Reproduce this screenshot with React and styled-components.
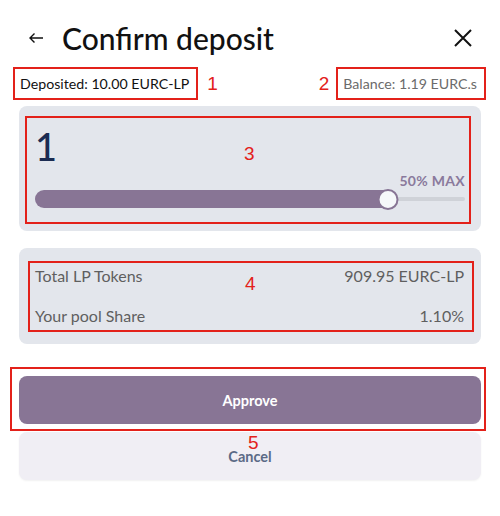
import styled, { createGlobalStyle } from "styled-components"

const GlobalStyle = createGlobalStyle`
  body {
    margin: 0;
    background: #fff;
    font-family: "Lato", "Noto Sans", sans-serif;
  }
`

const Page = styled.div`
  width: 500px;
  height: 516px;
  box-sizing: border-box;
  padding-top: 20px;
`

const Header = styled.div`
  display: flex;
  align-items: center;
  height: 36px;
  padding: 0 28px 0 29px;
  .title {
    margin: 0 0 0 18px;
    font-size: 30px;
    font-weight: 500;
    color: #111;
    flex: 1;
    line-height: 36px;
  }
`

const InfoRow = styled.div`
  display: flex;
  align-items: center;
  margin-top: 11px;
  padding: 0 14px 0 13px;
`

const RedBox = styled.div`
  border: 2px solid #e3211a;
  box-sizing: border-box;
  position: relative;
`

const InfoBox = styled(RedBox)`
  padding: 7px 7px 7px 5px;
  font-size: 14.2px;
  line-height: 15px;
  color: ${(p) => (p.$muted ? "#6b6b6b" : "#111")};
`

const Num = styled.span`
  font-family: "Liberation Sans", sans-serif;
  font-size: 19px;
  color: #e3211a;
  line-height: 20px;
`

const SideNum = styled(Num)`
  margin: ${(p) => (p.$left ? "0 7px 0 0" : "0 0 0 9px")};
`

const Spacer = styled.div`
  flex: 1;
`

const OverNum = styled(Num)`
  position: absolute;
  left: ${(p) => p.$x}px;
  top: ${(p) => p.$y}px;
`

const Card = styled.div`
  margin: ${(p) => p.$top}px 19px 0;
  background: #e3e6ec;
  border-radius: 8px;
  padding: ${(p) => p.$pad};
`

const AmountBox = styled(RedBox)`
  padding: 9px 4px 13px 8px;
  .amount {
    font-size: 38px;
    line-height: 38px;
    color: #1b2c52;
    font-weight: 500;
  }
  .max {
    margin-top: 8px;
    text-align: right;
    font-size: 14px;
    line-height: 16px;
    font-weight: 700;
    color: #8a7a9c;
    letter-spacing: 0.3px;
  }
`

const Slider = styled.div`
  position: relative;
  height: 20px;
  .track {
    position: absolute;
    left: 0;
    right: 0;
    top: 8px;
    height: 4px;
    border-radius: 2px;
    background: #cfd2d8;
  }
  .fill {
    position: absolute;
    left: 0;
    top: 1px;
    height: 18px;
    border-radius: 9px;
    background: #887595;
  }
  .thumb {
    position: absolute;
    top: 0;
    width: 21px;
    height: 21px;
    box-sizing: border-box;
    border-radius: 50%;
    background: #f6f8fa;
    border: 2px solid #887595;
    transform: translateX(-50%);
  }
`

const StatsBox = styled(RedBox)`
  padding: 3px 8px 4px 5px;
  display: flex;
  flex-direction: column;
  gap: 20px;
`

const StatRow = styled.div`
  display: flex;
  justify-content: space-between;
  font-size: 16px;
  line-height: 20px;
  color: #5f5f5f;
`

const ApproveBox = styled(RedBox)`
  margin: 23px 14px 0 10px;
  padding: 7px 3px 5px 7px;
`

const Button = styled.button`
  display: block;
  width: 100%;
  height: 48px;
  border: none;
  border-radius: 8px;
  font-family: "Lato", "Noto Sans", sans-serif;
  font-size: 14.5px;
  font-weight: 700;
  background: ${(p) => (p.$primary ? "#887595" : "#f0eef4")};
  color: ${(p) => (p.$primary ? "#fff" : "#5b6a86")};
  box-shadow: ${(p) => (p.$primary ? "none" : "0 1px 2px rgba(0,0,0,0.06)")};
`

const CancelWrap = styled.div`
  margin: 1px 19px 0;
`

const BackIcon = () => (
  <svg width="15" height="12" viewBox="0 0 15 12" fill="none" stroke="#111" strokeWidth="1.4">
    <path d="M14 6H1M5.5 1.5L1 6l4.5 4.5" />
  </svg>
)

const CloseIcon = () => (
  <svg width="18" height="18" viewBox="0 0 18 18" fill="none" stroke="#111" strokeWidth="2">
    <path d="M1 1l16 16M17 1L1 17" />
  </svg>
)

const App = () => {
  const value = 0.82
  return (
    <Page>
      <GlobalStyle />
      <Header>
        <BackIcon />
        <h1 className="title">Confirm deposit</h1>
        <CloseIcon />
      </Header>

      <InfoRow>
        <InfoBox>Deposited: 10.00 EURC-LP</InfoBox>
        <SideNum>1</SideNum>
        <Spacer />
        <SideNum $left>2</SideNum>
        <InfoBox $muted>Balance: 1.19 EURC.s</InfoBox>
      </InfoRow>

      <Card $top={6} $pad="10px 10px 7px 6px">
        <AmountBox>
          <div className="amount">1</div>
          <OverNum $x={217} $y={26}>3</OverNum>
          <div className="max">50% MAX</div>
          <Slider>
            <div className="track" />
            <div className="fill" style={{ width: `${value * 100 + 1}%` }} />
            <div className="thumb" style={{ left: `${value * 100}%` }} />
          </Slider>
        </AmountBox>
      </Card>

      <Card $top={17} $pad="13px 7px 12px 9px">
        <StatsBox>
          <OverNum $x={215} $y={11}>4</OverNum>
          <StatRow>
            <span>Total LP Tokens</span>
            <span>909.95 EURC-LP</span>
          </StatRow>
          <StatRow>
            <span>Your pool Share</span>
            <span>1.10%</span>
          </StatRow>
        </StatsBox>
      </Card>

      <ApproveBox>
        <Button $primary>Approve</Button>
        <OverNum $x={236} $y={64} style={{ zIndex: 1 }}>5</OverNum>
      </ApproveBox>
      <CancelWrap>
        <Button>Cancel</Button>
      </CancelWrap>
    </Page>
  )
}

export default App
